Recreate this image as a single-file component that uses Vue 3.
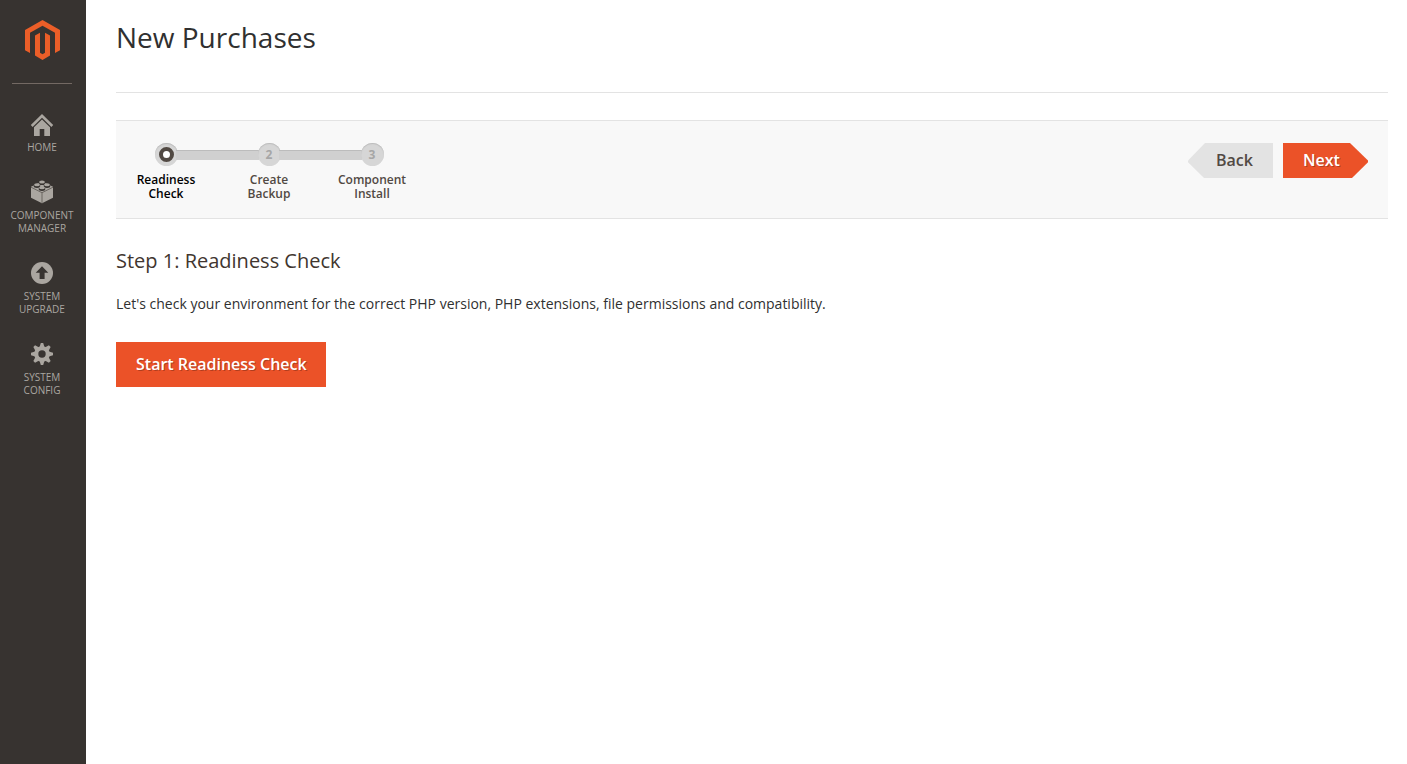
<template>
  <div class="page">
    <aside class="menu">
      <a href="#" class="logo" aria-label="Magento">
        <svg width="36" height="40" viewBox="-1 0 36 40">
          <path d="M17.500 0 35 10V30.300L30 33V12.800L17.500 5.700 5 12.800V33L0 30.300V10Z" />
          <path d="M10 15.600 15 12.800V32.800L17.500 34.200 20 32.800V12.800L25 15.600V35.600L17.500 40 10 35.600Z" />
        </svg>
      </a>
      <nav>
        <a v-for="item in menu" :key="item.name" href="#" class="menu-item">
          <svg v-if="item.name === 'home'" width="24" height="24" viewBox="0 0 24 24">
            <path d="M12 2 23.200 13 21.400 15 12 5.800 2.600 15 .8 13Z" />
            <path d="M12 7.500 20 15.300V24H14.300V17H9.700V24H4V15.300Z" />
          </svg>
          <svg v-else-if="item.name === 'component'" width="24" height="24" viewBox="0 0 24 24">
            <path d="M12 1.500 23 6.800V17.700L12 23.300 1 17.700V6.800Z" />
            <path class="edge" d="M1 7.200 12 12.700 23 7.200M12 12.700V23.300" />
            <g v-for="s in studs" :key="s.x + '-' + s.y">
              <ellipse class="shade" :cx="s.x" :cy="s.y + 1.200" rx="3.300" ry="1.900" />
              <ellipse :cx="s.x" :cy="s.y" rx="2.900" ry="1.500" />
            </g>
          </svg>
          <svg v-else-if="item.name === 'upgrade'" width="24" height="24" viewBox="0 0 24 24">
            <circle cx="12" cy="12" r="11" />
            <path class="shade" d="M12 5.200 18.300 11.800H14.600V18H9.600V11.800H5.700Z" />
          </svg>
          <svg v-else width="24" height="24" viewBox="0 0 24 24">
            <path v-for="a in [0, 45, 90, 135]" :key="a" d="M10.800 1H13.200L14.700 6V18L13.200 23H10.800L9.300 18V6Z" :transform="`rotate(${a} 12 12)`" />
            <circle cx="12" cy="12" r="7.800" />
            <circle class="shade" cx="12" cy="12" r="3.700" />
          </svg>
          <span v-for="word in item.words" :key="word">{{ word }} </span>
        </a>
      </nav>
    </aside>

    <main class="content">
      <header class="page-header">
        <h1>New Purchases</h1>
      </header>

      <div class="wizard">
        <ol class="steps">
          <li v-for="(step, idx) in steps" :key="step" :class="{ active: idx + 1 === current }">
            <span class="dot"><i v-if="idx + 1 === current"></i><template v-else>{{ idx + 1 }}</template></span>
            <span class="label">{{ step }}</span>
          </li>
        </ol>
        <div class="actions">
          <button type="button" class="btn-prev" @click="back">Back</button>
          <button type="button" class="btn-next" @click="next">Next</button>
        </div>
      </div>

      <section>
        <h2>Step {{ current }}: {{ steps[current - 1] }}</h2>
        <p>Let's check your environment for the correct PHP version, PHP extensions, file permissions and compatibility.</p>
        <button type="button" class="btn-start">Start Readiness Check</button>
      </section>
    </main>
  </div>
</template>

<script setup>
import { ref } from 'vue';

const menu = [
  { name: 'home', words: ['Home'] },
  { name: 'component', words: ['Component', 'Manager'] },
  { name: 'upgrade', words: ['System', 'Upgrade'] },
  { name: 'config', words: ['System', 'Config'] }
];

// round studs on top of the brick icon
const studs = [
  { x: 12, y: 2 },
  { x: 7, y: 4.8 },
  { x: 17, y: 4.8 },
  { x: 12, y: 7.8 }
];

const steps = ['Readiness Check', 'Create Backup', 'Component Install'];
const current = ref(1);

function back() {
  if (current.value > 1) current.value--;
}
function next() {
  if (current.value < steps.length) current.value++;
}
</script>

<style>
body {
  margin: 0;
  background: #fff;
}
</style>

<style scoped>
.page {
  display: flex;
  min-height: 100vh;
  font-family: "Open Sans", "Noto Sans", sans-serif;
  font-size: 14px;
  color: #303030;
}
.menu {
  box-sizing: border-box;
  flex: 0 0 86px;
  padding-right: 2px;
  background: #373330;
}
.logo {
  display: flex;
  justify-content: center;
  margin: 0 12px;
  padding: 20px 0 23px;
  border-bottom: 1px solid #736963;
}
.logo svg {
  fill: #eb5e28;
}
nav {
  display: flex;
  flex-direction: column;
  gap: 26px;
  padding-top: 28px;
}
.menu-item {
  display: flex;
  flex-direction: column;
  align-items: center;
  font-size: 10px;
  line-height: 13px;
  text-transform: uppercase;
  text-decoration: none;
  color: #aaa6a0;
}
.menu-item svg {
  margin-bottom: 5px;
  fill: #aaa6a0;
}
.menu-item .shade {
  fill: #373330;
}
.menu-item .edge {
  fill: none;
  stroke: #6b6661;
  stroke-width: 1;
}
.content {
  flex: 1;
  padding: 0 19px 0 30px;
}
.page-header {
  padding: 17px 0 35px;
  border-bottom: 1px solid #e3e3e3;
}
h1 {
  margin: 0;
  font-size: 28px;
  font-weight: 400;
  line-height: 40px;
}
.wizard {
  display: flex;
  justify-content: space-between;
  align-items: flex-start;
  margin-top: 27px;
  padding: 22px 20px 17px 0;
  background: #f8f8f8;
  border-top: 1px solid #e3e3e3;
  border-bottom: 1px solid #e3e3e3;
}
.steps {
  display: flex;
  gap: 3px;
  margin: 0;
  padding: 0;
  list-style: none;
}
.steps li {
  position: relative;
  display: flex;
  flex-direction: column;
  align-items: center;
  width: 100px;
}
/* track between two dots */
.steps li + li::before {
  content: "";
  position: absolute;
  top: 7px;
  right: 60px;
  width: 83px;
  height: 10px;
  box-sizing: border-box;
  background: #d0d0d0;
  border-top: 1px solid #bcbcbc;
}
.dot {
  display: flex;
  align-items: center;
  justify-content: center;
  position: relative;
  width: 23px;
  height: 23px;
  border-radius: 50%;
  background: #d6d6d6;
  box-shadow: inset 0 1px 1px #bcbcbc;
  font-size: 12px;
  font-weight: 700;
  color: #a6a6a6;
}
.dot i {
  width: 7px;
  height: 7px;
  border: 4px solid #514943;
  border-radius: 50%;
  background: #fff;
}
.label {
  width: 76px;
  margin-top: 7px;
  font-size: 12px;
  font-weight: 600;
  line-height: 14px;
  text-align: center;
  color: #514943;
}
.active .label {
  color: #000;
}
.actions {
  display: flex;
  gap: 10px;
}
button {
  border: 0;
  font-family: inherit;
  font-size: 16px;
  font-weight: 600;
  cursor: pointer;
}
.btn-prev,
.btn-next {
  width: 85px;
  height: 35px;
  line-height: 35px;
}
.btn-prev {
  padding: 0 20px 0 28px;
  background: #e3e3e3;
  color: #514943;
  clip-path: polygon(17px 0, 100% 0, 100% 100%, 16px 100%, 0 55%, 0 50%);
}
.btn-next {
  padding: 0 28px 0 20px;
  background: #eb5228;
  color: #fff;
  text-shadow: 1px 1px 0 rgba(0, 0, 0, 0.25);
  clip-path: polygon(0 0, 67px 0, 100% 50%, 100% 55%, 69px 100%, 0 100%);
}
h2 {
  margin: 28px 0 0;
  font-size: 20px;
  font-weight: 400;
  line-height: 28px;
  color: #41362f;
}
p {
  margin: 19px 0 28px;
  line-height: 20px;
}
.btn-start {
  height: 45px;
  padding: 0 19px 2px 20px;
  background: #eb5228;
  color: #fff;
  text-shadow: 1px 1px 0 rgba(0, 0, 0, 0.25);
}
</style>
